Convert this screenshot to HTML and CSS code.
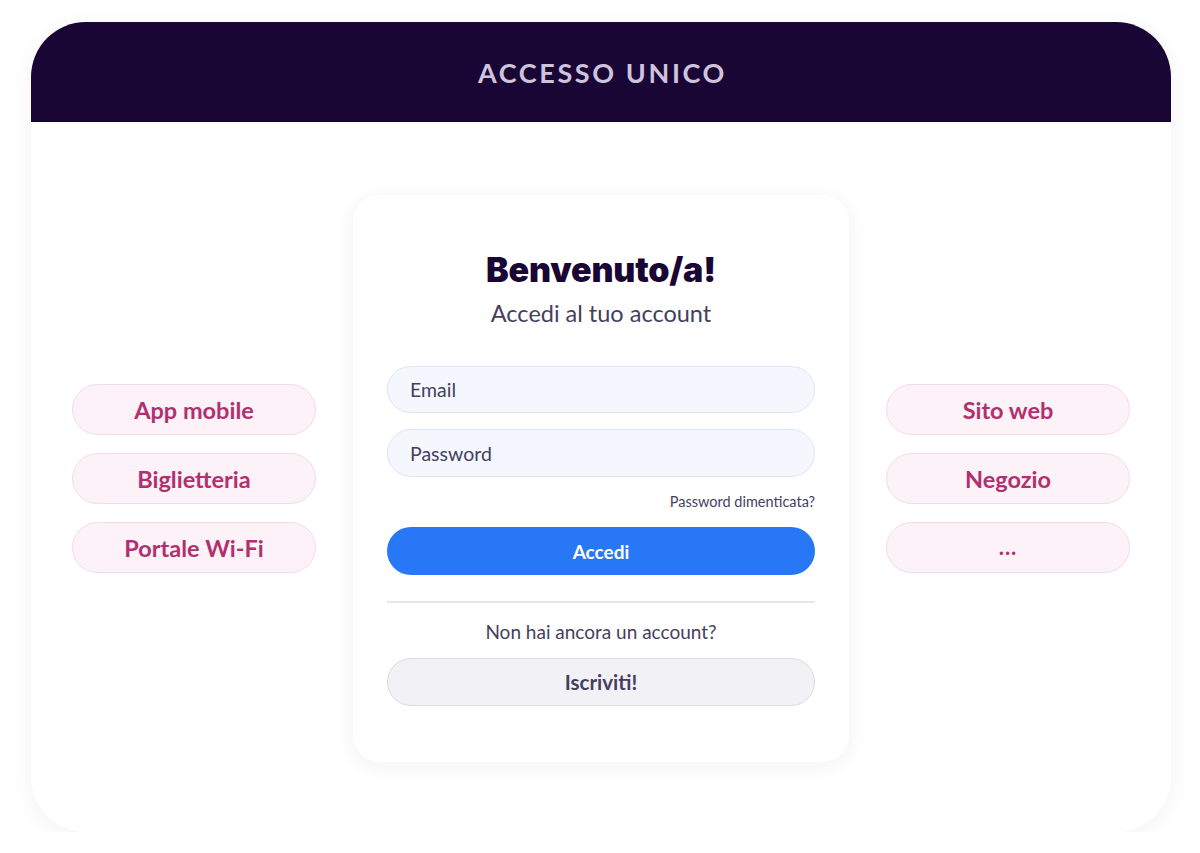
FILE: index.html
```html
<!DOCTYPE html>
<html lang="it">
<head>
<meta charset="utf-8">
<title>Accesso unico</title>
<link rel="stylesheet" href="styles.css">
</head>
<body>
<div class="frame">
  <header class="frame-head">ACCESSO UNICO</header>
  <main class="frame-body">
    <div class="pills">
      <div class="pill">App mobile</div>
      <div class="pill">Biglietteria</div>
      <div class="pill">Portale Wi-Fi</div>
    </div>
    <section class="card">
      <h1 class="title">Benvenuto/a!</h1>
      <p class="subtitle">Accedi al tuo account</p>
      <div class="field">Email</div>
      <div class="field field-2">Password</div>
      <div class="forgot">Password dimenticata?</div>
      <div class="btn btn-primary">Accedi</div>
      <hr class="divider">
      <p class="noacc">Non hai ancora un account?</p>
      <div class="btn btn-secondary">Iscriviti!</div>
    </section>
    <div class="pills">
      <div class="pill">Sito web</div>
      <div class="pill">Negozio</div>
      <div class="pill pill-dots">...</div>
    </div>
  </main>
</div>
</body>
</html>
```
FILE: styles.css
```css
* { box-sizing: border-box; }
html, body { margin: 0; padding: 0; background: #ffffff; }
body {
  font-family: "Lato", "Source Sans Pro", "Open Sans", sans-serif;
  color: #463e5e;
}
.frame {
  width: 1140px;
  height: 810px;
  margin: 22px 0 0 31px;
  border-radius: 55px;
  background: #ffffff;
  box-shadow: 0 4px 24px rgba(30, 10, 60, 0.05);
  overflow: hidden;
  display: flex;
  flex-direction: column;
}
.frame-head {
  height: 100px;
  flex: none;
  background: #1a0634;
  color: #cfc4de;
  font-weight: 700;
  font-size: 27px;
  letter-spacing: 2.6px;
  display: flex;
  align-items: center;
  justify-content: center;
  padding-left: 3px;
}
.frame-body {
  flex: 1;
  display: flex;
  align-items: flex-start;
  justify-content: center;
  gap: 37px;
  padding: 73px 41px 0;
}
.pills {
  width: 244px;
  display: flex;
  flex-direction: column;
  gap: 18px;
  margin-top: 189px;
}
.pill {
  height: 51px;
  border-radius: 26px;
  background: #fcf2f7;
  border: 1px solid #f0dde7;
  color: #b2306f;
  font-weight: 700;
  font-size: 23.5px;
  display: flex;
  align-items: center;
  justify-content: center;
}
.pill-dots { font-size: 22px; letter-spacing: 1px; padding-bottom: 2px; }
.card {
  width: 496px;
  height: 567px;
  border-radius: 26px;
  background: #ffffff;
  box-shadow: 0 4px 22px rgba(30, 10, 60, 0.06);
  padding: 55px 34px 56px;
  display: flex;
  flex-direction: column;
}
.title {
  margin: 0;
  font-family: "Inter", "DejaVu Sans", sans-serif;
  font-weight: 900;
  font-size: 34px;
  line-height: 40px;
  text-align: center;
  color: #1a0634;
  letter-spacing: -0.2px;
}
.subtitle {
  margin: 9px 0 0;
  font-size: 23.5px;
  line-height: 28px;
  text-align: center;
  color: #463e5e;
}
.field {
  margin-top: 39px;
  height: 47px;
  border-radius: 24px;
  background: #f4f7fe;
  border: 1px solid #dde6f6;
  padding-left: 22px;
  display: flex;
  align-items: center;
  font-size: 19.5px;
  color: #463e5e;
}
.field-2 { margin-top: 16px; height: 48px; }
.forgot {
  margin-top: 16px;
  font-size: 14.5px;
  line-height: 18px;
  text-align: right;
  color: #463e5e;
}
.btn {
  height: 48px;
  border-radius: 24px;
  display: flex;
  align-items: center;
  justify-content: center;
  font-weight: 700;
  font-size: 19px;
}
.btn-primary {
  margin-top: 16px;
  background: #2777f6;
  color: #ffffff;
}
.divider {
  margin: 26px 0 0;
  border: 0;
  height: 2px;
  background: #e6e5e9;
}
.noacc {
  margin: 17px 0 0;
  font-size: 19px;
  line-height: 24px;
  text-align: center;
  color: #463e5e;
}
.btn-secondary {
  margin-top: 14px;
  background: #f2f1f5;
  border: 1px solid #dcdae0;
  color: #463e5e;
  font-size: 20.5px;
}
```
